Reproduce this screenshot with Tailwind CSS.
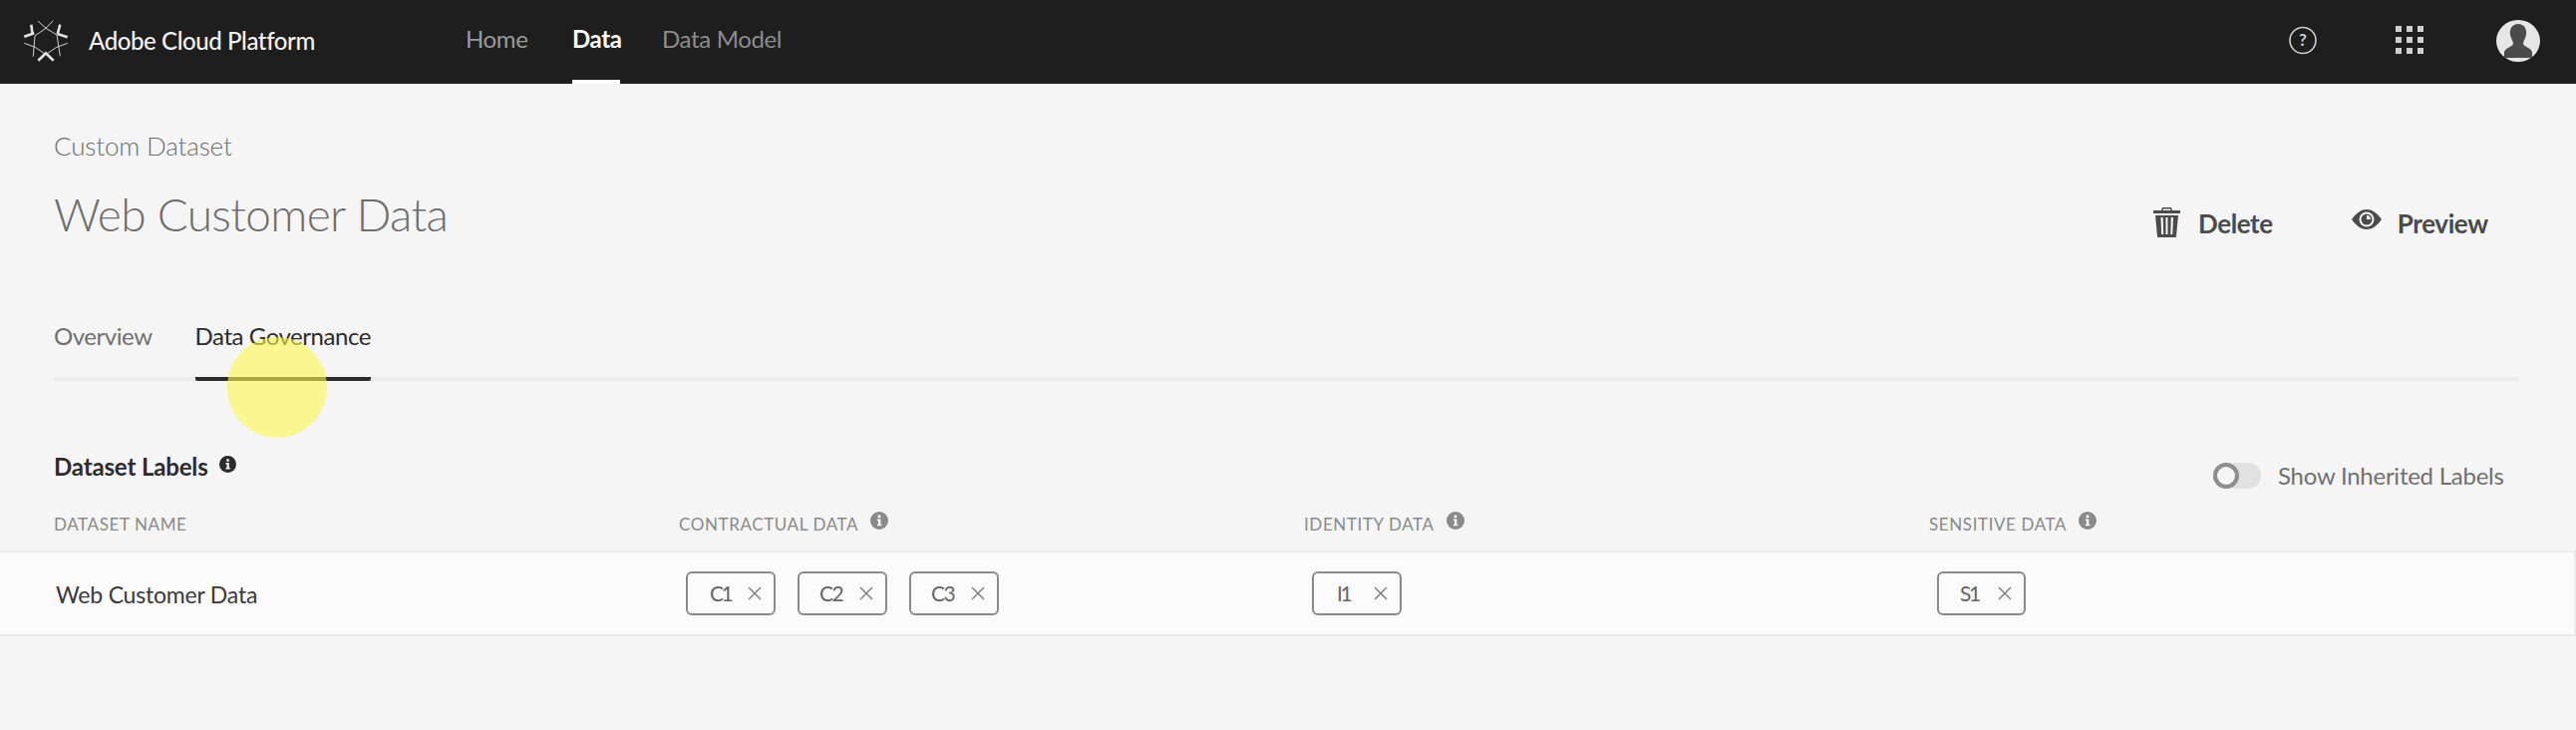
<!DOCTYPE html>
<html><head><meta charset="utf-8"><script src="https://cdn.jsdelivr.net/npm/@tailwindcss/browser@4"></script></head>
<body class="bg-[#f5f5f5] font-['Lato','Open_Sans',sans-serif] w-[2584px] h-[732px] overflow-hidden relative">
<header class="h-[84px] bg-[#1e1e1e] flex items-center relative">
  <svg class="absolute left-[16px] top-[14px] w-[60px] h-[54px]" viewBox="0 0 60 54" fill="none" stroke="#e4e4e4">
    <path d="M22 7 L30 14.300 L37.300 6.700 M30 14.300 L19 22 L17.300 42.700 M30 14.300 L41 21 L44.300 42.300 M8.300 29.300 Q20 32 30 40.700 Q40 32 51.700 29.300" stroke-width="0.9"/>
    <path d="M15.300 10.700 L16.700 20.700 M8.300 22.700 L18.300 19.300 M44.300 10.700 L41.700 20 M41.700 20 L51.700 23.300 M22.300 46.700 L30 39.300 L37.700 46.700" stroke-width="2.600"/>
  </svg>
  <span class="absolute left-[89px] top-[26px] text-[24px] leading-[30px] font-medium tracking-[-0.4px] text-[#f2f2f2]">Adobe Cloud Platform</span>
  <nav class="absolute left-[467px] top-0 h-[84px] flex text-[24px] tracking-[-0.35px]">
    <a class="w-[107px] h-full pt-[24px] leading-[30px] text-[#9a9a9a]">Home</a>
    <a class="w-[48px] h-full pt-[24px] leading-[30px] text-white font-bold border-b-4 border-white">Data</a>
    <a class="ml-[42px] h-full pt-[24px] leading-[30px] text-[#8c8c8c]">Data Model</a>
  </nav>
  <svg class="absolute left-[2296px] top-[26px] w-[28px] h-[29px]" viewBox="0 0 28 29" fill="none"><circle cx="14" cy="14.500" r="13" stroke="#cfcfcf" stroke-width="1.600"/><text x="14" y="20" text-anchor="middle" font-size="17" font-weight="700" font-family="Lato" fill="#cfcfcf">?</text></svg>
  <div class="absolute left-[2403px] top-[26px] grid grid-cols-3 gap-[5px]">
    <i class="block w-[6px] h-[6px] bg-[#cfcfcf]"></i><i class="block w-[6px] h-[6px] bg-[#cfcfcf]"></i><i class="block w-[6px] h-[6px] bg-[#cfcfcf]"></i>
    <i class="block w-[6px] h-[6px] bg-[#cfcfcf]"></i><i class="block w-[6px] h-[6px] bg-[#cfcfcf]"></i><i class="block w-[6px] h-[6px] bg-[#cfcfcf]"></i>
    <i class="block w-[6px] h-[6px] bg-[#cfcfcf]"></i><i class="block w-[6px] h-[6px] bg-[#cfcfcf]"></i><i class="block w-[6px] h-[6px] bg-[#cfcfcf]"></i>
  </div>
  <svg class="absolute left-[2504px] top-[20px] w-[44px] h-[42px]" viewBox="0 0 44 42"><ellipse cx="22" cy="21" rx="22" ry="21" fill="#e6e6e6"/><path d="M22 4 C16 4 13 9 14 15 C15 19 17 21 17 24 C16 27 9 28 8 32 L8 37 Q8 38 10 38 L34 38 Q36 38 36 37 L36 32 C35 28 28 27 27 24 C27 21 29 19 30 15 C31 9 28 4 22 4Z" fill="#4b4b4b"/></svg>
</header>
<main class="pl-[54px] pr-[58px]">
  <div class="flex justify-between">
    <div>
      <div class="mt-[46px] text-[26px] leading-[32px] font-light tracking-[-0.15px] text-[#6e6e6e]">Custom Dataset</div>
      <h1 class="mt-[23px] text-[46px] leading-[60px] font-light tracking-[-0.65px] text-[#6e6e6e]">Web Customer Data</h1>
    </div>
  </div>
  <div class="absolute left-[2160px] top-[206px] flex items-center text-[#4b4b4b] text-[26px] font-bold tracking-[-0.4px]">
    <svg class="w-[27px] h-[30px]" viewBox="0 0 27 30" fill="#4b4b4b"><path d="M9 0h9l1 3h8v3H0V3h8zM10 1.500l-.500 1.500h8l-.500-1.500z"/><path d="M2 8h23l-2 21q0 1-1 1H5q-1 0-1-1zM7.500 10l.7 17h2l-.5-17zM12.500 10v17h2V10zM17.800 10l-.5 17h2l.7-17z" fill-rule="evenodd"/></svg>
    <span class="ml-[18px] mt-[3px] leading-[30px]">Delete</span>
    <svg class="ml-[79px] w-[30px] h-[20px] -mt-[5px]" viewBox="0 0 30 20"><path d="M0 10C5 3 10 0 15 0s10 3 15 10c-5 7-10 10-15 10S5 17 0 10Z" fill="#4b4b4b"/><circle cx="15" cy="10" r="7.500" fill="#f5f5f5"/><circle cx="15" cy="10" r="5.500" fill="#4b4b4b"/><path d="M15 6a4 4 0 0 1 4 4h-4z" fill="#f5f5f5"/></svg>
    <span class="ml-[16px] mt-[3px] leading-[30px]">Preview</span>
  </div>
  <div class="mt-[77px] border-b-4 border-[#ebebeb] h-[60px] flex gap-[43px] text-[24px] tracking-[-0.45px]">
    <a class="h-[60px] leading-[30px] text-[#707070]">Overview</a>
    <a class="h-[60px] leading-[30px] text-[#2c2c2c] border-b-4 border-[#2c2c2c] rounded-b-[2px]">Data Governance</a>
  </div>
  <div class="mt-[71px] flex items-center h-[30px]">
    <span class="text-[24px] font-bold text-[#2c2c2c] leading-[30px] tracking-[-0.15px]">Dataset Labels</span>
    <svg class="ml-[11px] -mt-[6px] w-[17px] h-[17px]" viewBox="0 0 17 17"><circle cx="8.500" cy="8.500" r="8.500" fill="#2c2c2c"/><path d="M6.500 7h3.300v5h1v1.500H6.500V12h1V8.500h-1zM7.300 3.300h2.500v2.500H7.300z" fill="#f5f5f5"/></svg>
  </div>
  <div class="absolute left-[2220px] top-[462px] flex items-center">
    <span class="relative w-[48px] h-[26px] rounded-full bg-[#e1e1e1]"><span class="absolute left-0 top-0 w-[26px] h-[26px] rounded-full bg-[#f5f5f5] border-[4px] border-[#8e8e8e]"></span></span>
    <span class="ml-[17px] text-[24px] leading-[30px] tracking-[-0.25px] text-[#707070]">Show Inherited Labels</span>
  </div>
</main>
<div class="mt-[29px] grid grid-cols-[627px_627px_627px_1fr] pl-[54px] h-[40px] text-[17px] tracking-[0.6px] text-[#8a8a8a] leading-[24px]">
  <div class="pt-[2px]">DATASET NAME</div>
  <div class="flex"><span class="pt-[2px]">CONTRACTUAL DATA</span><svg class="ml-[12px] mt-[1px] w-[18px] h-[18px]" viewBox="0 0 17 17"><circle cx="8.500" cy="8.500" r="8.500" fill="#8a8a8a"/><path d="M6.500 7h3.300v5h1v1.500H6.500V12h1V8.500h-1zM7.300 3.300h2.500v2.500H7.300z" fill="#f5f5f5"/></svg></div>
  <div class="flex"><span class="pt-[2px]">IDENTITY DATA</span><svg class="ml-[12px] mt-[1px] w-[18px] h-[18px]" viewBox="0 0 17 17"><circle cx="8.500" cy="8.500" r="8.500" fill="#8a8a8a"/><path d="M6.500 7h3.300v5h1v1.500H6.500V12h1V8.500h-1zM7.300 3.300h2.500v2.500H7.300z" fill="#f5f5f5"/></svg></div>
  <div class="flex"><span class="pt-[2px]">SENSITIVE DATA</span><svg class="ml-[12px] mt-[1px] w-[18px] h-[18px]" viewBox="0 0 17 17"><circle cx="8.500" cy="8.500" r="8.500" fill="#8a8a8a"/><path d="M6.500 7h3.300v5h1v1.500H6.500V12h1V8.500h-1zM7.300 3.300h2.500v2.500H7.300z" fill="#f5f5f5"/></svg></div>
</div>
<div class="w-[2584px] h-[86px] bg-[#fbfbfb] border-y-2 border-r-2 border-[#ebebeb] grid grid-cols-[627px_627px_627px_1fr] pl-[54px] items-center">
  <div class="pl-[2px] pt-[2px] text-[23px] tracking-[-0.2px] text-[#3a3a3a]">Web Customer Data</div>
  <div class="pl-[7px] flex gap-[22px]">
    <span class="w-[90px] h-[44px] border-2 border-[#8a8a8a] rounded-[6px] flex items-center justify-between pl-[22px] pr-[12px] text-[21px] tracking-[-2.500px] text-[#666]"><span>C1</span><svg class="w-[14px] h-[14px]" viewBox="0 0 14 14" stroke="#808080" stroke-width="1.500"><path d="M1 1l12 12M13 1L1 13"/></svg></span>
    <span class="w-[90px] h-[44px] border-2 border-[#8a8a8a] rounded-[6px] flex items-center justify-between pl-[20px] pr-[12px] text-[21px] tracking-[-1.500px] text-[#666]"><span>C2</span><svg class="w-[14px] h-[14px]" viewBox="0 0 14 14" stroke="#808080" stroke-width="1.500"><path d="M1 1l12 12M13 1L1 13"/></svg></span>
    <span class="w-[90px] h-[44px] border-2 border-[#8a8a8a] rounded-[6px] flex items-center justify-between pl-[20px] pr-[12px] text-[21px] tracking-[-1.500px] text-[#666]"><span>C3</span><svg class="w-[14px] h-[14px]" viewBox="0 0 14 14" stroke="#808080" stroke-width="1.500"><path d="M1 1l12 12M13 1L1 13"/></svg></span>
  </div>
  <div class="pl-[8px] flex">
    <span class="w-[90px] h-[44px] border-2 border-[#8a8a8a] rounded-[6px] flex items-center justify-between pl-[23px] pr-[12px] text-[21px] tracking-[-2.500px] text-[#666]"><span>I1</span><svg class="w-[14px] h-[14px]" viewBox="0 0 14 14" stroke="#808080" stroke-width="1.500"><path d="M1 1l12 12M13 1L1 13"/></svg></span>
  </div>
  <div class="pl-[8px] flex">
    <span class="w-[89px] h-[44px] border-2 border-[#8a8a8a] rounded-[6px] flex items-center justify-between pl-[21px] pr-[12px] text-[21px] tracking-[-2.500px] text-[#666]"><span>S1</span><svg class="w-[14px] h-[14px]" viewBox="0 0 14 14" stroke="#808080" stroke-width="1.500"><path d="M1 1l12 12M13 1L1 13"/></svg></span>
  </div>
</div>
<div class="absolute left-[228px] top-[338px] w-[100px] h-[101px] rounded-full bg-[#fff84c]/60"></div>
</body></html>
